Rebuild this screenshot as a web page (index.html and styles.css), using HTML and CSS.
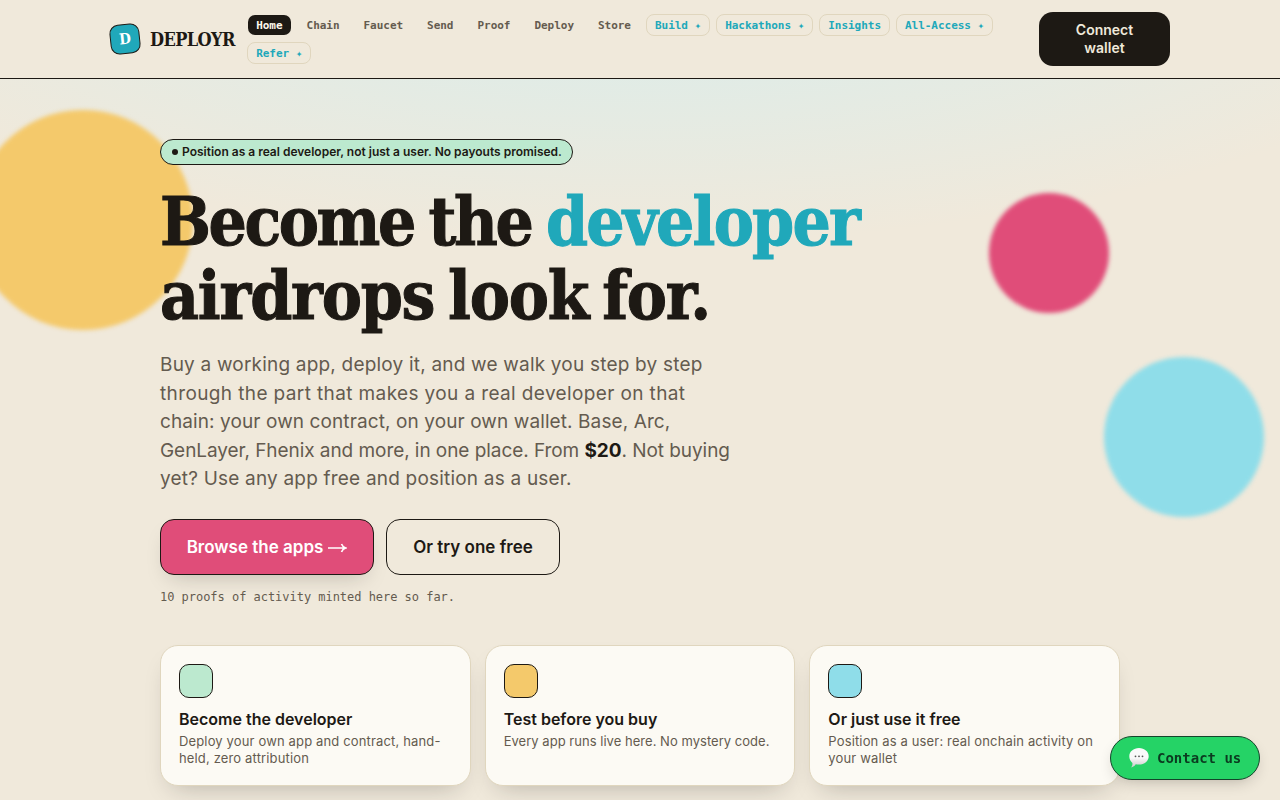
FILE: index.html
```html
<!DOCTYPE html>
<html lang="en">

<head>
    <meta charset="UTF-8">
    <meta name="viewport" content="width=device-width, initial-scale=1.0">
    <title>Deployr</title>
    <link rel="stylesheet" href="styles.css">
</head>

<body>
    <header class="header">
        <div class="header-inner">
            <a class="brand">
                <span class="brand-mark">D</span>
                <span class="brand-name">DEPLOYR</span>
            </a>
            <nav class="nav">
                <a class="nav-link active">Home</a>
                <a class="nav-link">Chain</a>
                <a class="nav-link">Faucet</a>
                <a class="nav-link">Send</a>
                <a class="nav-link">Proof</a>
                <a class="nav-link">Deploy</a>
                <a class="nav-link">Store</a>
                <a class="nav-link boxed">Build <i class="star">✦</i></a>
                <a class="nav-link boxed">Hackathons <i class="star">✦</i></a>
                <a class="nav-link boxed">Insights</a>
                <a class="nav-link boxed">All-Access <i class="star">✦</i></a>
                <a class="nav-link boxed">Refer <i class="star">✦</i></a>
            </nav>
            <button class="connect">Connect<br>wallet</button>
        </div>
    </header>

    <main class="hero">
        <span class="blob blob-yellow"></span>
        <span class="blob blob-pink"></span>
        <span class="blob blob-blue"></span>

        <div class="container">
            <div class="pill"><i class="dot"></i><span>Position as a real developer, not just a user. No payouts promised.</span></div>
            <h1 class="title">Become the <em>developer</em><br><span class="title-end">airdrops look for.</span></h1>
            <p class="lead">
                <span class="wide">Buy a working app, deploy it, and we walk you step by step</span><br>
                <span class="wider">through the part that makes you a real developer on that</span><br>
                <span class="normal">chain: your own contract, on your own wallet. Base, Arc,</span><br>
                <span class="tight">GenLayer, Fhenix and more, in one place. From <b>$20</b>. Not buying</span><br>
                <span class="wide">yet? Use any app free and position as a user.</span>
            </p>
            <div class="actions">
                <a class="btn btn-primary">Browse the apps
                    <svg class="arrow" width="19" height="12" viewBox="0 0 19 12"><path d="M0 7h17.500M13.500 3c.8 2.200 2 3.400 4.200 4c-2.200 .6-3.400 1.800-4.200 4" fill="none" stroke="currentColor" stroke-width="1.600"/></svg>
                </a>
                <a class="btn btn-plain">Or try one free</a>
            </div>
            <p class="count">10 proofs of activity minted here so far.</p>

            <div class="cards">
                <div class="card">
                    <span class="swatch green"></span>
                    <h3>Become the developer</h3>
                    <p>Deploy your own app and contract, hand-<br>held, zero attribution</p>
                </div>
                <div class="card">
                    <span class="swatch yellow"></span>
                    <h3>Test before you buy</h3>
                    <p class="snug">Every app runs live here. No mystery code.</p>
                </div>
                <div class="card">
                    <span class="swatch blue"></span>
                    <h3>Or just use it free</h3>
                    <p>Position as a user: real onchain activity on<br>your wallet</p>
                </div>
            </div>
        </div>
    </main>

    <a class="contact">
        <svg class="bubble" width="20" height="20" viewBox="0 0 20 20">
            <defs>
                <linearGradient id="shade" x1="0" y1="0" x2="0" y2="1">
                    <stop offset="0.500" stop-color="#fafafa"/>
                    <stop offset="1" stop-color="#c9c9c9"/>
                </linearGradient>
            </defs>
            <path d="M10 0c5.500 0 9.700 3.600 9.700 8.300s-4.200 8.300-9.700 8.300c-1.200 0-2.300-.1-3.300-.4-1 1.700-2.500 2.700-4.700 3.300 1.200-1.300 1.600-2.900 1.400-4.600C1.400 13.400.3 11.200.3 8.300.3 3.600 4.500 0 10 0z" fill="url(#shade)"/>
            <circle cx="6.500" cy="8.300" r=".9" fill="#555"/>
            <circle cx="10" cy="8.300" r=".9" fill="#555"/>
            <circle cx="13.500" cy="8.300" r=".9" fill="#555"/>
        </svg>
        <span>Contact us</span>
    </a>
</body>

</html>
```
FILE: styles.css
```css
* {
    margin: 0;
    padding: 0;
    box-sizing: border-box;
}

:root {
    --bg: #f0e9db;
    --ink: #1d1914;
    --muted: #645b4f;
    --line: #e0d6be;
    --teal: #20a8ba;
    --pink: #e04d79;
    --yellow: #f4c96b;
    --blue: #8fdde9;
    --green: #bce9cf;
    --sans: "Inter", sans-serif;
    --mono: "DejaVu Sans Mono", monospace;
    --slab: "DejaVu Serif Condensed", "DejaVu Serif", serif;
}

html,
body {
    height: 100%;
    overflow: hidden;
}

body {
    background: radial-gradient(1500px 540px at 50% -80px, #d3eef0, rgba(240, 233, 219, 0) 60%) var(--bg);
    color: var(--ink);
    font-family: var(--sans);
}

.header {
    background: var(--bg);
    border-bottom: 1px solid var(--ink);
    height: 79px;
}

.header-inner {
    width: 1060px;
    height: 78px;
    margin: 0 auto;
    display: flex;
    align-items: center;
}

.brand {
    display: flex;
    align-items: center;
    gap: 10px;
    width: 137.2px;
    flex: none;
    font-family: var(--slab);
    font-weight: bold;
}

.brand-mark {
    width: 30px;
    height: 30px;
    flex: none;
    border: 1px solid var(--ink);
    border-radius: 9px;
    background: var(--teal);
    color: #fff;
    font-size: 15px;
    line-height: 28px;
    text-align: center;
    transform: rotate(-6deg);
}

.brand-name {
    font-size: 18px;
    letter-spacing: -0.6px;
}

.nav {
    width: 780px;
    flex: none;
    display: flex;
    flex-wrap: wrap;
    gap: 6px;
    font-family: var(--mono);
    font-size: 11px;
    font-weight: bold;
    letter-spacing: -0.03px;
    color: var(--muted);
}

.nav-link {
    height: 22px;
    line-height: 22px;
    padding: 0 8px;
    border: 1px solid transparent;
    border-radius: 8px;
    white-space: nowrap;
}

.nav-link.active {
    background: var(--ink);
    background-clip: padding-box;
    color: #fff8ec;
}

.nav-link.boxed {
    border-color: var(--line);
    color: var(--teal);
}

.star {
    display: inline-block;
    width: 6.6px;
    font-family: "DejaVu Sans", sans-serif;
    font-size: 8px;
    font-style: normal;
    line-height: 10px;
}

.connect {
    width: 131px;
    height: 54px;
    margin-left: auto;
    border: 0;
    border-radius: 14px;
    background: var(--ink);
    color: var(--bg);
    font: 600 14px/18px var(--sans);
}

.hero {
    position: relative;
    height: 721px;
    padding-top: 60px;
}

.blob {
    position: absolute;
    border-radius: 50%;
    filter: blur(2px);
}

.blob-yellow {
    left: -27.5px;
    top: 31px;
    width: 220px;
    height: 220px;
    background: var(--yellow);
}

.blob-pink {
    left: 988.5px;
    top: 114px;
    width: 120px;
    height: 120px;
    background: var(--pink);
}

.blob-blue {
    left: 1103.5px;
    top: 277.8px;
    width: 160px;
    height: 160px;
    background: var(--blue);
}

.container {
    position: relative;
    width: 960px;
    margin: 0 auto;
}

.pill {
    display: flex;
    align-items: center;
    gap: 4px;
    width: 413px;
    height: 26px;
    padding: 0 0 1px 11px;
    border: 1px solid var(--ink);
    border-radius: 13px;
    background: var(--green);
    font-size: 12px;
    font-weight: 600;
    white-space: nowrap;
}

.dot {
    width: 6px;
    height: 6px;
    flex: none;
    border-radius: 50%;
    background: var(--ink);
}

.title {
    margin-top: 20px;
    font-family: var(--slab);
    font-size: 67px;
    font-weight: bold;
    line-height: 74px;
    letter-spacing: -2.4px;
    word-spacing: -4px;
    white-space: nowrap;
    -webkit-text-stroke: 1px currentColor;
}

.title em {
    font-style: normal;
    letter-spacing: -1.8px;
    color: var(--teal);
}

.title-end {
    letter-spacing: -1.2px;
    word-spacing: -6px;
}

.lead {
    margin-top: 18px;
    font-size: 19px;
    line-height: 28.5px;
    color: var(--muted);
    white-space: nowrap;
}

.lead .normal {
    letter-spacing: 0.1px;
}

.lead .wide {
    letter-spacing: 0.2px;
}

.lead .wider {
    letter-spacing: 0.38px;
}

.lead .tight {
    letter-spacing: -0.06px;
}

.lead b {
    color: var(--ink);
}

.actions {
    display: flex;
    gap: 12px;
    margin-top: 25px;
}

.btn {
    display: flex;
    align-items: center;
    justify-content: center;
    height: 56px;
    border: 1px solid var(--ink);
    border-radius: 14px;
    font-size: 17px;
    font-weight: 600;
    white-space: nowrap;
}

.btn-primary {
    gap: 5px;
    width: 214px;
    background: var(--pink);
    color: #fff;
    box-shadow: 0 10px 22px -10px rgba(29, 25, 20, 0.25);
}

.btn-plain {
    width: 174px;
}

.count {
    margin-top: 14px;
    font-family: var(--mono);
    font-size: 12px;
    line-height: 16px;
    letter-spacing: -0.03px;
    color: var(--muted);
}

.cards {
    display: grid;
    grid-template-columns: repeat(3, 1fr);
    gap: 14px;
    margin-top: 40px;
}

.card {
    height: 141px;
    padding: 18px;
    border: 1px solid var(--line);
    border-radius: 18px;
    background: #fcfaf4;
    box-shadow: 0 12px 26px -12px rgba(29, 25, 20, 0.28);
    white-space: nowrap;
}

.swatch {
    display: block;
    width: 34px;
    height: 34px;
    border: 1px solid var(--ink);
    border-radius: 10px;
}

.swatch.green {
    background: var(--green);
}

.swatch.yellow {
    background: var(--yellow);
}

.swatch.blue {
    background: var(--blue);
}

.card h3 {
    margin-top: 11px;
    font-size: 16px;
    font-weight: 600;
    line-height: 20px;
}

.card p {
    margin-top: 4px;
    font-size: 13px;
    line-height: 17px;
    letter-spacing: 0.15px;
    color: var(--muted);
}

.card p.snug {
    letter-spacing: 0.03px;
}

.contact {
    position: fixed;
    right: 20px;
    bottom: 20px;
    display: flex;
    align-items: center;
    gap: 8px;
    width: 150px;
    height: 44px;
    padding-left: 18px;
    border: 1px solid #12452a;
    border-radius: 22px;
    background: #25d366;
    box-shadow: 0 6px 16px -6px rgba(29, 25, 20, 0.3);
    color: #0b3b20;
    font-family: var(--mono);
    font-size: 14px;
    font-weight: bold;
    white-space: nowrap;
}

.bubble {
    flex: none;
}
```
